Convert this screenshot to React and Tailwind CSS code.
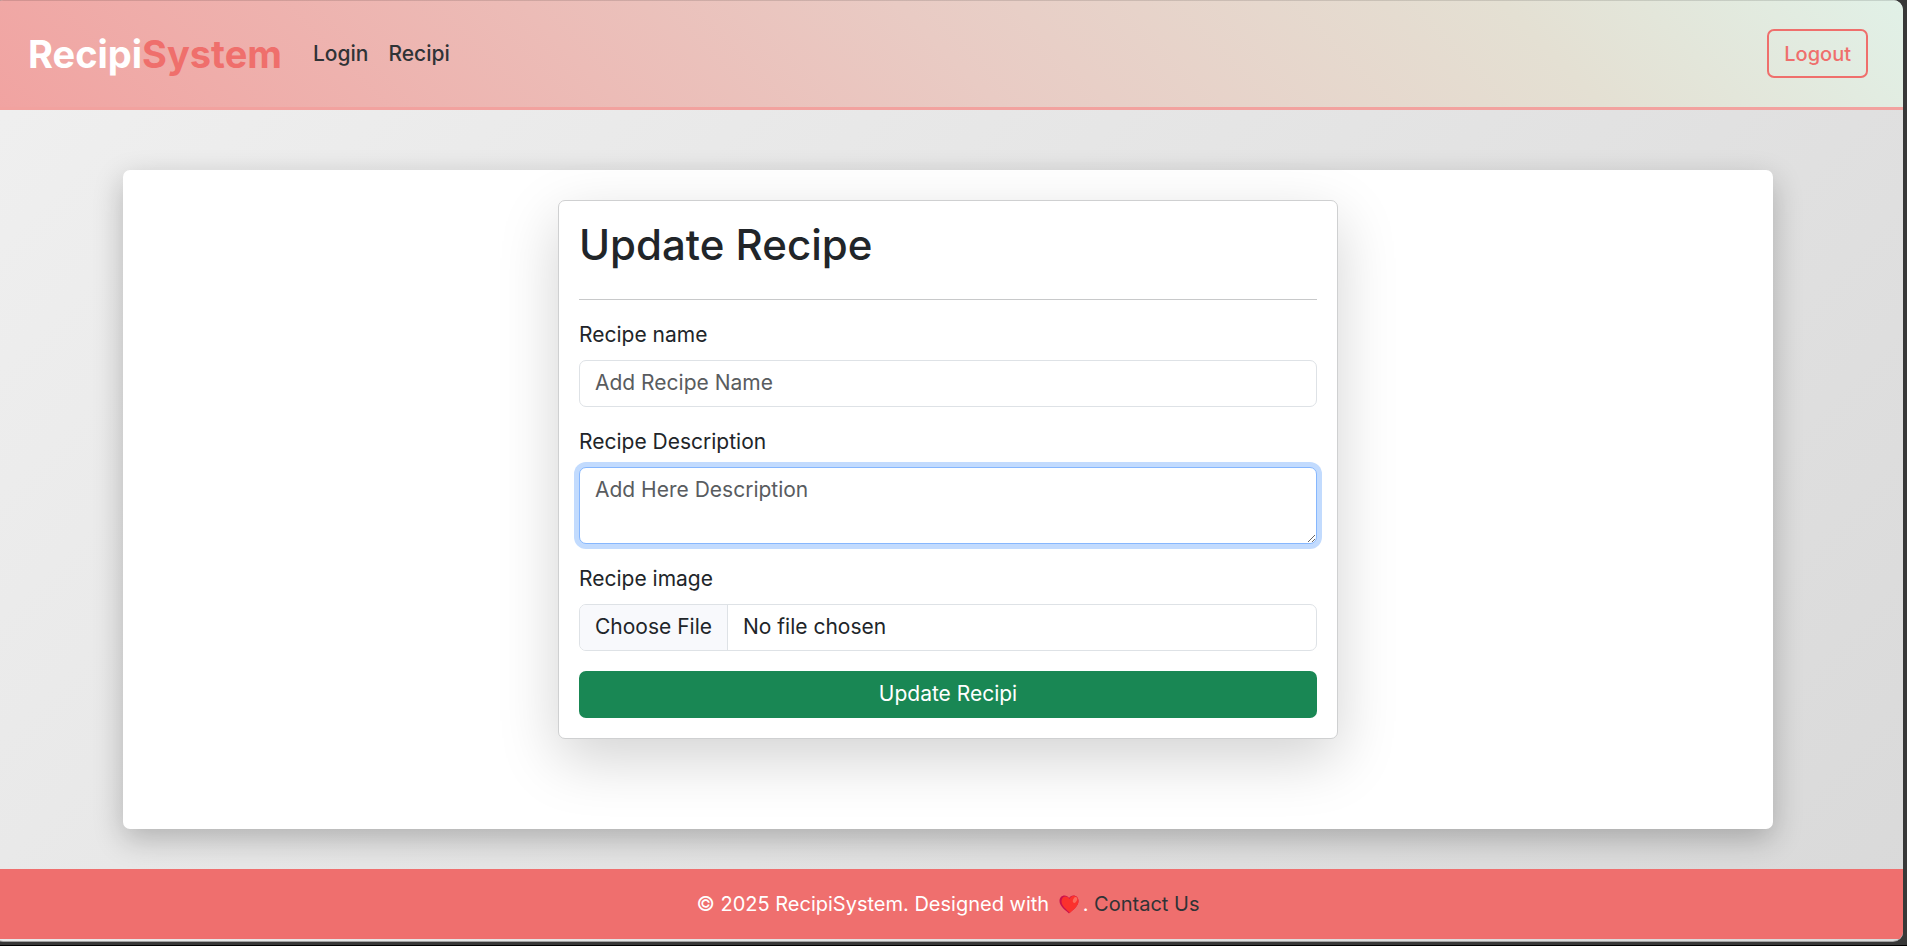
const control =
  "block h-[47px] w-full rounded-[7px] border border-[#dee2e6] bg-white text-[#212529] placeholder:text-[#595c5f] placeholder:opacity-100";

function Header() {
  return (
    <header className="flex h-[110px] shrink-0 items-center justify-between border-b-[3px] border-[#f2a29f] bg-[linear-gradient(45deg,#f1a3a1,#e9cbc4_50%,#e4e0d3_80%,#e1f1e7)] px-[35px] shadow-[inset_0_1px_0_rgba(0,0,0,0.12)]">
      <nav className="flex items-center" aria-label="Main">
        <a href="#home" className="mr-[31px] text-[38px] leading-[48px] font-bold text-white">
          Recipi<span className="text-[#ef6f6c]">System</span>
        </a>
        <div className="flex gap-5 text-[21px] font-medium text-[#2f3336]">
          <a href="#login">Login</a>
          <a href="#recipi">Recipi</a>
        </div>
      </nav>
      <button
        type="button"
        className="h-[49px] rounded-[7px] border-2 border-[#ef6f6c] px-[15px] text-xl font-medium text-[#ef6f6c]"
      >
        Logout
      </button>
    </header>
  );
}

function RecipeForm() {
  return (
    <form className="w-[780px] max-w-full rounded-[7px] border border-[#cfd0d1] bg-white p-5 text-[21px] shadow-[0_20px_60px_rgba(0,0,0,0.175)]">
      <h1 className="text-[42px] leading-[48px] font-medium">Update Recipe</h1>
      <hr className="mt-[30px] mb-5 border-[#c8c9ca]" />
      <div className="mb-5">
        <label htmlFor="recipe-name" className="mb-[10px] block">
          Recipe name
        </label>
        <input
          id="recipe-name"
          type="text"
          placeholder="Add Recipe Name"
          className={`${control} px-[15px] pb-[2px]`}
        />
      </div>
      <div className="mb-5">
        <label htmlFor="recipe-description" className="mb-[10px] block">
          Recipe Description
        </label>
        <textarea
          id="recipe-description"
          placeholder="Add Here Description"
          className="block h-[77px] w-full resize-y rounded-[7px] border border-[#86b7fe] bg-white px-[15px] py-[7px] shadow-[0_0_0_5px_#c2dbfe] outline-none placeholder:text-[#595c5f] placeholder:opacity-100"
        />
      </div>
      <div className="mb-5">
        <label htmlFor="recipe-image" className="mb-[10px] block">
          Recipe image
        </label>
        <input
          id="recipe-image"
          type="file"
          className={`${control} overflow-hidden file:mr-[15px] file:h-[45px] file:border-r file:border-[#dee2e6] file:bg-[#f8f9fc] file:px-[15px] file:pb-[2px]`}
        />
      </div>
      <button type="submit" className="h-[47px] w-full rounded-[7px] bg-[#198754] pb-[2px] text-white">
        Update Recipi
      </button>
    </form>
  );
}

function Heart() {
  return (
    <svg viewBox="0 0 20 19" className="mx-1 inline-block h-[19px] w-5 align-[-3px]" role="img" aria-label="love">
      <path
        d="M10 18.5C7 15.5 0.5 11.5 0.5 6C0.5 2.8 2.8 0.6 5.5 0.6C7.5 0.6 9 1.5 10 3C11 1.5 12.5 0.6 14.5 0.6C17.2 0.6 19.5 2.8 19.5 6C19.5 11.5 13 15.5 10 18.5Z"
        fill="#c9114f"
      />
      <path
        d="M10.8 18C8.5 15 2.5 11.5 2.5 6.5C2.5 3.6 4.3 1.6 6.5 1.6C8.3 1.6 9.6 2.6 10.4 4C11.2 2 12.7 0.7 14.6 0.7C17.2 0.7 19.5 2.8 19.5 6C19.5 11.5 13.5 15.5 10.8 18Z"
        fill="#fb312d"
      />
      <ellipse cx="16" cy="5" rx="1.9" ry="3" transform="rotate(25 16 5)" fill="#fb6a5c" />
    </svg>
  );
}

export default function App() {
  return (
    <div className="flex min-h-screen flex-col overflow-hidden border-b border-black bg-[#383838] pr-1 pb-[3px] font-[Inter,'Noto_Sans',sans-serif] text-xl leading-[30px] text-[#212529]">
      <div className="-ml-[7px] flex grow flex-col overflow-hidden rounded-[10px] border-b border-[#a0a0a0] bg-[linear-gradient(135deg,#f0f0f0,#d9d9d9)] pb-[2px]">
        <Header />
        <main className="flex grow flex-col px-[130px] pt-[60px] pb-10">
          <section className="flex grow flex-col items-center rounded-[7px] bg-white px-5 pt-[30px] pb-[90px] shadow-[0_10px_30px_rgba(0,0,0,0.24)]">
            <RecipeForm />
          </section>
        </main>
        <footer className="flex h-[70px] shrink-0 items-center justify-center bg-[#ef6f6e] text-white">
          <p>
            © 2025 RecipiSystem. Designed with <Heart />.{" "}
            <a href="#contact" className="text-[#2f3336]">
              Contact Us
            </a>
          </p>
        </footer>
      </div>
    </div>
  );
}
